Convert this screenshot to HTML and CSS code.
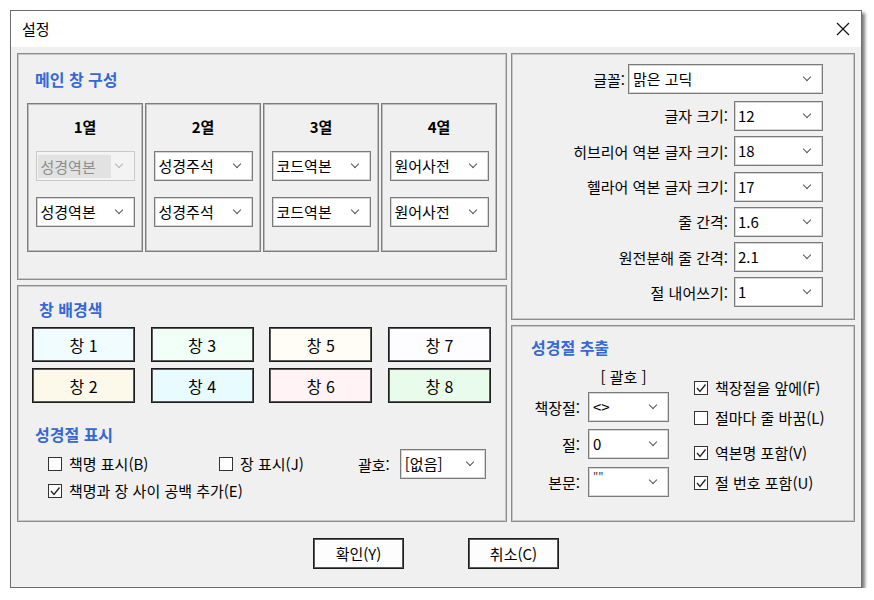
FILE: index.html
```html
<!DOCTYPE html>
<html lang="ko">
<head>
    <meta charset="UTF-8">
    <title>설정</title>
    <link rel="stylesheet" href="styles.css">
</head>
<body>
    <div class="dialog">
        <div class="titlebar">
            <span class="title">설정</span>
            <svg class="close" viewBox="0 0 14 14" width="14" height="14"><path d="M1 1 L13 13 M13 1 L1 13" stroke="#111" stroke-width="1.2" fill="none"/></svg>
        </div>
        <div class="body">
            <div class="main">
                <div class="left">
                    <div class="group layout-group">
                        <div class="group-title">메인 창 구성</div>
                        <div class="columns">
                            <div class="col">
                                <div class="col-head">1열</div>
                                <div class="combo disabled"><span class="value">성경역본</span><span class="arrow"></span></div>
                                <div class="combo second"><span class="value">성경역본</span><span class="arrow"></span></div>
                            </div>
                            <div class="col">
                                <div class="col-head">2열</div>
                                <div class="combo"><span class="value">성경주석</span><span class="arrow"></span></div>
                                <div class="combo second"><span class="value">성경주석</span><span class="arrow"></span></div>
                            </div>
                            <div class="col">
                                <div class="col-head">3열</div>
                                <div class="combo"><span class="value">코드역본</span><span class="arrow"></span></div>
                                <div class="combo second"><span class="value">코드역본</span><span class="arrow"></span></div>
                            </div>
                            <div class="col">
                                <div class="col-head">4열</div>
                                <div class="combo"><span class="value">원어사전</span><span class="arrow"></span></div>
                                <div class="combo second"><span class="value">원어사전</span><span class="arrow"></span></div>
                            </div>
                        </div>
                    </div>
                    <div class="group color-group">
                        <div class="group-title swatch-title">창 배경색</div>
                        <div class="swatches">
                            <button class="swatch c1">창 1</button>
                            <button class="swatch c3">창 3</button>
                            <button class="swatch c5">창 5</button>
                            <button class="swatch c7">창 7</button>
                            <button class="swatch c2">창 2</button>
                            <button class="swatch c4">창 4</button>
                            <button class="swatch c6">창 6</button>
                            <button class="swatch c8">창 8</button>
                        </div>
                        <div class="group-title verse-title">성경절 표시</div>
                        <div class="opt-row first">
                            <label class="checkitem book"><span class="check"></span>책명 표시(B)</label>
                            <label class="checkitem chap"><span class="check"></span>장 표시(J)</label>
                            <span class="bracket-label">괄호:</span>
                            <div class="combo bracket"><span class="value">[없음]</span><span class="arrow"></span></div>
                        </div>
                        <div class="opt-row">
                            <label class="checkitem"><span class="check on"><svg viewBox="0 0 12 12" width="12" height="12"><path d="M2 6 L5 9.5 L10.5 2.5" stroke="#222" stroke-width="1.3" fill="none"/></svg></span>책명과 장 사이 공백 추가(E)</label>
                        </div>
                    </div>
                </div>
                <div class="right">
                    <div class="group font-group">
                        <div class="fields">
                            <div class="field font-field"><span class="label">글꼴:</span><div class="combo wide"><span class="value">맑은 고딕</span><span class="arrow"></span></div></div>
                            <div class="field"><span class="label">글자 크기:</span><div class="combo small"><span class="value">12</span><span class="arrow"></span></div></div>
                            <div class="field"><span class="label">히브리어 역본 글자 크기:</span><div class="combo small"><span class="value">18</span><span class="arrow"></span></div></div>
                            <div class="field"><span class="label">헬라어 역본 글자 크기:</span><div class="combo small"><span class="value">17</span><span class="arrow"></span></div></div>
                            <div class="field"><span class="label">줄 간격:</span><div class="combo small"><span class="value">1.6</span><span class="arrow"></span></div></div>
                            <div class="field"><span class="label">원전분해 줄 간격:</span><div class="combo small"><span class="value">2.1</span><span class="arrow"></span></div></div>
                            <div class="field"><span class="label">절 내어쓰기:</span><div class="combo small"><span class="value">1</span><span class="arrow"></span></div></div>
                        </div>
                    </div>
                    <div class="group extract-group">
                        <div class="group-title extract-title">성경절 추출</div>
                        <div class="extract">
                            <div class="brackets">
                                <div class="brackets-head">[ 괄호 ]</div>
                                <div class="xrow r1"><span class="xlabel">책장절:</span><div class="combo tiny"><span class="value">&lt;&gt;</span><span class="arrow"></span></div></div>
                                <div class="xrow r2"><span class="xlabel">절:</span><div class="combo tiny"><span class="value">0</span><span class="arrow"></span></div></div>
                                <div class="xrow r3"><span class="xlabel">본문:</span><div class="combo tiny"><span class="value quote">""</span><span class="arrow"></span></div></div>
                            </div>
                            <div class="checks">
                                <label class="checkitem k1"><span class="check on"><svg viewBox="0 0 12 12" width="12" height="12"><path d="M2 6 L5 9.5 L10.5 2.5" stroke="#222" stroke-width="1.3" fill="none"/></svg></span>책장절을 앞에(F)</label>
                                <label class="checkitem k2"><span class="check"></span>절마다 줄 바꿈(L)</label>
                                <label class="checkitem k3"><span class="check on"><svg viewBox="0 0 12 12" width="12" height="12"><path d="M2 6 L5 9.5 L10.5 2.5" stroke="#222" stroke-width="1.3" fill="none"/></svg></span>역본명 포함(V)</label>
                                <label class="checkitem k4"><span class="check on"><svg viewBox="0 0 12 12" width="12" height="12"><path d="M2 6 L5 9.5 L10.5 2.5" stroke="#222" stroke-width="1.3" fill="none"/></svg></span>절 번호 포함(U)</label>
                            </div>
                        </div>
                    </div>
                </div>
            </div>
            <div class="actions">
                <button class="action">확인(Y)</button>
                <button class="action">취소(C)</button>
            </div>
        </div>
    </div>
</body>
</html>
```

FILE: styles.css
```css
body {
    margin: 0;
    background-color: #fff;
    font-family: "Noto Sans CJK KR", "Noto Sans", sans-serif;
    font-size: 15px;
    color: #000;
}

.dialog {
    margin: 10px 0 0 10px;
    width: 852px;
    height: 578px;
    box-sizing: border-box;
    border: 1px solid #6d6d6d;
    box-shadow: 3px 3px 3px rgba(0, 0, 0, 0.5);
    display: flex;
    flex-direction: column;
}

.titlebar {
    height: 36px;
    flex: none;
    background-color: #fff;
    display: flex;
    align-items: center;
    padding: 0 11px;
}

.title {
    line-height: 20px;
}

.close {
    margin-left: auto;
}

.body {
    flex: 1;
    background-color: #f0f0f0;
    padding: 6px 6px 0;
}

.main {
    display: flex;
    gap: 4px;
    height: 469px;
}

.left,
.right {
    display: flex;
    flex-direction: column;
    gap: 5px;
}

.left {
    width: 490px;
}

.right {
    width: 344px;
}

.group {
    box-sizing: border-box;
    border: 1px solid #8c8c8c;
    box-shadow: inset 0 0 0 1px #c8c8c8;
}

.group-title {
    font-size: 16px;
    font-weight: bold;
    line-height: 22px;
    color: #3468d4;
    margin: 14px 0 0 17px;
}

/* 메인 창 구성 */
.layout-group {
    height: 227px;
}

.columns {
    display: grid;
    grid-template-columns: repeat(4, 116px);
    gap: 2px;
    margin: 13px 0 0 9px;
}

.col {
    height: 149px;
    box-sizing: border-box;
    border: 1px solid #7d7d7d;
    box-shadow: inset 0 0 0 1px #bcbcbc;
    display: flex;
    flex-direction: column;
    align-items: center;
}

.col-head {
    font-weight: bold;
    line-height: 20px;
    margin-top: 13px;
}

.col .combo {
    width: 99px;
    margin-top: 14px;
}

.col .combo.second {
    margin-top: 16px;
}

/* combo box */
.combo {
    height: 30px;
    box-sizing: border-box;
    border: 1px solid #7a7a7a;
    box-shadow: inset 0 0 0 1px #d6d6d6;
    background-color: #fff;
    display: flex;
    align-items: center;
    padding: 0 12px 0 4px;
    line-height: 20px;
    white-space: nowrap;
}

.combo .arrow {
    margin-left: auto;
    width: 5px;
    height: 5px;
    border-right: 1px solid #555;
    border-bottom: 1px solid #555;
    transform: translateY(-2px) rotate(45deg);
    flex: none;
}

.combo.disabled {
    background-color: #f3f3f3;
    border-color: #c9c9c9;
    box-shadow: none;
    color: #8d8d8d;
    padding-left: 1px;
}

.combo.disabled .value {
    background-color: #e2e2e2;
    width: 70px;
    padding-left: 3px;
    line-height: 23px;
}

.combo.disabled .arrow {
    border-color: #b4b4b4;
}

/* 창 배경색 */
.color-group {
    height: 237px;
}

.swatch-title {
    margin: 12px 0 0 21px;
}

.swatches {
    display: grid;
    grid-template-columns: repeat(4, 103px);
    grid-auto-rows: 35px;
    justify-content: space-between;
    row-gap: 6px;
    width: 459px;
    margin: 7px 0 0 14px;
}

.swatch {
    font-family: inherit;
    font-size: 16px;
    color: #000;
    border: 1px solid #1c1c1c;
    box-shadow: inset 0 0 0 1px #5a5a5a;
    padding: 0;
}

.c1 { background-color: #f0fcff; }
.c2 { background-color: #fcf8ea; }
.c3 { background-color: #f2fff8; }
.c4 { background-color: #e8fbff; }
.c5 { background-color: #fffdf6; }
.c6 { background-color: #fff3f6; }
.c7 { background-color: #fdfcff; }
.c8 { background-color: #e9fbea; }

.verse-title {
    margin-top: 20px;
}

.opt-row {
    display: flex;
    align-items: center;
    padding-left: 30px;
    height: 20px;
    margin-top: 2px;
}

.opt-row.first {
    height: 30px;
    margin-top: 4px;
}

.checkitem {
    display: flex;
    align-items: center;
    gap: 7px;
    line-height: 20px;
    white-space: nowrap;
}

.checkitem.book {
    width: 171px;
}

.checkitem.chap {
    width: 139px;
}

.check {
    width: 14px;
    height: 14px;
    box-sizing: border-box;
    border: 1px solid #333;
    background-color: #fff;
    display: flex;
    align-items: center;
    justify-content: center;
    flex: none;
}

.bracket-label {
    margin-right: 10px;
}

.combo.bracket {
    width: 86px;
}

/* 글꼴 */
.font-group {
    height: 267px;
}

.fields {
    display: flex;
    flex-direction: column;
    align-items: flex-end;
    gap: 5.3px;
    padding: 10px 31px 0 0;
}

.field {
    display: flex;
    align-items: center;
    gap: 6px;
}

.font-field {
    gap: 3px;
    margin-bottom: 1.7px;
}

.combo.wide {
    width: 195px;
}

.combo.small {
    width: 89px;
    padding-left: 3px;
}

/* 성경절 추출 */
.extract-group {
    flex: 1;
}

.extract-title {
    margin: 10px 0 0 19px;
}

.extract {
    display: flex;
    gap: 25px;
    margin: 9px 0 0 10px;
}

.brackets-head {
    line-height: 20px;
    padding-left: 66px;
    width: 71px;
    text-align: center;
}

.xrow {
    display: flex;
    align-items: center;
    gap: 8px;
    margin-top: 7px;
}

.xrow.r1 {
    margin-top: 5px;
}

.xrow.r3 {
    margin-top: 8px;
}

.xlabel {
    width: 58px;
    text-align: right;
}

.combo.tiny {
    width: 81px;
}

.value.quote {
    font-size: 11px;
    color: #333;
    align-self: flex-start;
    line-height: 18px;
}

.checks {
    display: flex;
    flex-direction: column;
    padding-top: 11px;
}

.checks .k2,
.checks .k4 {
    margin-top: 10px;
}

.checks .k3 {
    margin-top: 15px;
}

/* buttons */
.actions {
    display: flex;
    justify-content: center;
    gap: 64px;
    margin-top: 16px;
}

.action {
    width: 91px;
    height: 31px;
    font-family: inherit;
    font-size: 15px;
    color: #000;
    background-color: #fdfdfd;
    border: 1px solid #1c1c1c;
    box-shadow: inset 0 0 0 1px #5a5a5a;
    padding: 0;
}
```
